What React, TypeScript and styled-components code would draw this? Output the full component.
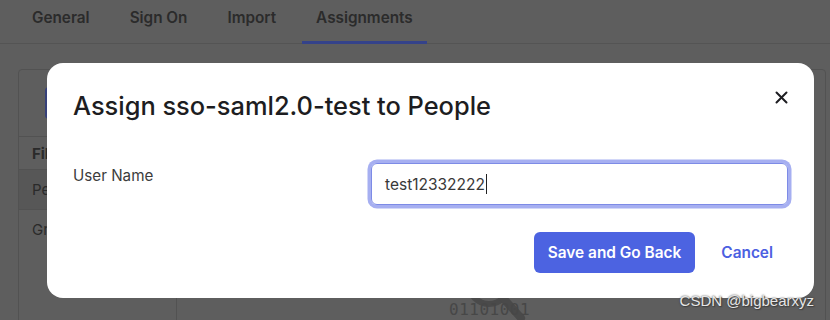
import * as React from 'react';
import styled, { createGlobalStyle } from 'styled-components';

const GlobalStyle = createGlobalStyle`
  html, body {
    margin: 0;
    padding: 0;
    background: #5e5e5e;
  }
  * {
    box-sizing: border-box;
  }
`;

const Page = styled.div`
  position: relative;
  width: 830px;
  height: 320px;
  overflow: hidden;
  background: #5e5e5e;
  font-family: Inter, 'Noto Sans', sans-serif;
`;

const TabBar = styled.div`
  display: flex;
  gap: 12px;
  height: 44px;
  padding-left: 18px;
  border-bottom: 1px solid #545454;
`;

const Tab = styled.div<{ active?: boolean }>`
  padding: 8px 14px 0;
  height: 44px;
  font-size: 15.3px;
  line-height: 20px;
  font-weight: 600;
  color: #2b2b2b;
  border-bottom: 3px solid ${p => (p.active ? '#34428a' : 'transparent')};
  margin-bottom: -1px;
`;

const Body = styled.div`
  padding: 25px 4px 0 18px;
`;

const Frame = styled.div`
  display: grid;
  grid-template-columns: 158px 1fr;
  height: 260px;
  border: 1px solid #525252;
  border-radius: 4px;
`;

const Sidebar = styled.div`
  display: flex;
  flex-direction: column;
  border-right: 1px solid #525252;
`;

const SideTop = styled.div`
  height: 66px;
  padding: 17px 0 0 26px;
`;

const AssignButton = styled.div`
  width: 110px;
  height: 32px;
  border-radius: 4px;
  background: #37417a;
`;

const SideRow = styled.div<{ header?: boolean; selected?: boolean }>`
  height: ${p => (p.header ? '33px' : '40px')};
  padding-left: 13px;
  display: flex;
  align-items: center;
  border-top: 1px solid #525252;
  font-size: 15px;
  font-weight: ${p => (p.header ? 700 : 400)};
  color: #2a2a2a;
  background: ${p => (p.selected ? '#575757' : 'transparent')};
`;

const Main = styled.div`
  display: flex;
  justify-content: center;
  padding-top: 218px;
`;

const EmptyArt = styled.div`
  position: relative;
  width: 120px;
  height: 40px;
  margin-left: -20px;
`;

const Binary = styled.div`
  position: relative;
  padding: 12px 0 0 18px;
  font-family: 'DejaVu Sans Mono', 'Liberation Mono', monospace;
  font-size: 16px;
  letter-spacing: 0.5px;
  color: #474747;
`;

const Modal = styled.div`
  position: absolute;
  left: 47px;
  top: 63px;
  width: 767px;
  height: 235px;
  background: #ffffff;
  border-radius: 16px;
  padding: 27px 26px 0;
  display: flex;
  flex-direction: column;
`;

const ModalHeader = styled.div`
  display: flex;
  justify-content: space-between;
  align-items: flex-start;
`;

const Title = styled.h2`
  margin: 0;
  font-size: 25.4px;
  line-height: 32px;
  font-weight: 500;
  color: #1d1d21;
`;

const CloseButton = styled.button`
  border: 0;
  background: none;
  padding: 0;
  margin: -1px -1px 0 0;
  width: 16px;
  height: 16px;
  display: flex;
  align-items: center;
  justify-content: center;
  cursor: pointer;
`;

const FieldRow = styled.div`
  display: grid;
  grid-template-columns: 298px 1fr;
  margin-top: 41px;
`;

const Label = styled.label`
  padding-top: 1px;
  font-size: 15.2px;
  line-height: 24px;
  color: #3c3c3c;
`;

const InputBox = styled.div`
  height: 42px;
  border: 1.5px solid #7d8be6;
  border-radius: 6px;
  box-shadow: 0 0 0 3.5px #a6aff1;
  padding-left: 13px;
  display: flex;
  align-items: center;
  font-size: 15.5px;
  color: #383838;
`;

const Caret = styled.span`
  display: inline-block;
  width: 1px;
  height: 20px;
  margin-left: 1px;
  background: #222;
`;

const Actions = styled.div`
  display: flex;
  justify-content: flex-end;
  align-items: center;
  gap: 11px;
  margin-top: 27px;
`;

const PrimaryButton = styled.button`
  height: 41px;
  padding: 0 14px;
  border: 0;
  border-radius: 6px;
  background: #4c63e1;
  color: #ffffff;
  font-family: Inter, sans-serif;
  font-size: 15.4px;
  font-weight: 600;
  cursor: pointer;
`;

const LinkButton = styled.button`
  height: 41px;
  padding: 0 15px;
  border: 0;
  background: none;
  color: #4c60e1;
  font-family: Inter, sans-serif;
  font-size: 15.4px;
  font-weight: 600;
  cursor: pointer;
`;

const Watermark = styled.div`
  position: absolute;
  right: 16px;
  bottom: 11px;
  font-family: 'Liberation Sans', Arial, sans-serif;
  font-size: 15px;
  color: #e6e6e6;
  text-shadow: 0 0 2px #333, 1px 1px 1px #444;
`;

const tabs = ['General', 'Sign On', 'Import', 'Assignments'];

const App = () => {
  return (
    <Page>
      <GlobalStyle />
      <TabBar>
        {tabs.map(t => (
          <Tab key={t} active={t === 'Assignments'}>
            {t}
          </Tab>
        ))}
      </TabBar>
      <Body>
        <Frame>
          <Sidebar>
            <SideTop>
              <AssignButton />
            </SideTop>
            <SideRow header>Filters</SideRow>
            <SideRow selected>People</SideRow>
            <SideRow>Groups</SideRow>
          </Sidebar>
          <Main>
            <EmptyArt>
              <svg
                width="70"
                height="60"
                viewBox="0 0 70 60"
                style={{ position: 'absolute', left: 30, top: -26 }}
              >
                <circle cx="28" cy="22" r="20" fill="none" stroke="#4a4a4a" strokeWidth="6" />
                <path d="M42 36 L60 56" stroke="#4a4a4a" strokeWidth="8" strokeLinecap="round" />
              </svg>
              <Binary>01101001</Binary>
            </EmptyArt>
          </Main>
        </Frame>
      </Body>

      <Modal role="dialog">
        <ModalHeader>
          <Title>Assign sso-saml2.0-test to People</Title>
          <CloseButton aria-label="Close">
            <svg width="13" height="13" viewBox="0 0 13 13">
              <path d="M1.5 1.5 L11.5 11.5 M11.5 1.5 L1.5 11.5" stroke="#1d1d21" strokeWidth="2" strokeLinecap="round" />
            </svg>
          </CloseButton>
        </ModalHeader>
        <FieldRow>
          <Label>User Name</Label>
          <InputBox role="textbox">
            test12332222
            <Caret />
          </InputBox>
        </FieldRow>
        <Actions>
          <PrimaryButton>Save and Go Back</PrimaryButton>
          <LinkButton>Cancel</LinkButton>
        </Actions>
      </Modal>

      <Watermark>CSDN @bigbearxyz</Watermark>
    </Page>
  );
};

export default App;
